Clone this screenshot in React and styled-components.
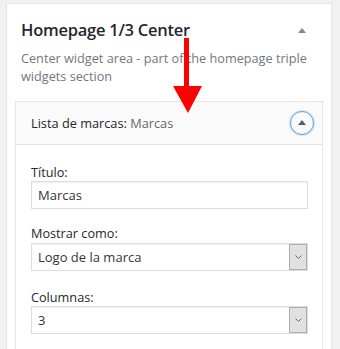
import React from "react";
import styled, { createGlobalStyle } from "styled-components";

const GlobalStyle = createGlobalStyle`
  html, body { margin: 0; padding: 0; }
  body {
    background: #f1f1f1;
    font-family: "Open Sans", "Noto Sans", sans-serif;
    color: #23282d;
  }
`;

const Page = styled.div`
  position: relative;
  width: 340px;
  height: 349px;
  overflow: hidden;
  padding: 3px 0 0 6px;
  box-sizing: border-box;
`;

const Panel = styled.section`
  width: 326px;
  box-sizing: border-box;
  background: #fff;
  border: 1px solid #e5e5e5;
  box-shadow: 0 1px 1px rgba(0, 0, 0, 0.04);
  min-height: 360px;
`;

const PanelHead = styled.div`
  display: flex;
  align-items: center;
  justify-content: space-between;
  padding: 14px 17px 0 14px;
`;

const Title = styled.h2`
  margin: 0;
  font-size: 16.5px;
  letter-spacing: -0.25px;
  line-height: 24px;
  font-weight: 600;
  color: #23282d;
`;

const ToggleButton = styled.button`
  width: 24px;
  height: 24px;
  padding: 0;
  border: 0;
  background: transparent;
  display: flex;
  align-items: center;
  justify-content: center;
`;

const Triangle = styled.span`
  width: 0;
  height: 0;
  border-left: 4px solid transparent;
  border-right: 4px solid transparent;
  border-bottom: 5px solid ${(p) => p.$color || "#72777c"};
`;

const Description = styled.p`
  margin: 7px 0 0;
  padding: 0 14px;
  font-size: 12.7px;
  line-height: 18px;
  color: #72777c;
`;

const WidgetsArea = styled.div`
  padding: 16px 8px 0;
`;

const Widget = styled.div`
  border: 1px solid #e5e5e5;
  background: #fff;
`;

const WidgetTop = styled.div`
  height: 42px;
  background: #fafafa;
  border-bottom: 1px solid #e5e5e5;
  display: flex;
  align-items: center;
  justify-content: space-between;
  padding: 0 8px 0 15px;
`;

const WidgetTitle = styled.h3`
  margin: 0;
  font-size: 12.75px;
  font-weight: 400;
  color: #23282d;
`;

const InWidgetTitle = styled.span`
  color: #606a73;
`;

const CircleToggle = styled.button`
  width: 24px;
  height: 24px;
  box-sizing: border-box;
  padding: 0 0 1px;
  border-radius: 50%;
  border: 1px solid #5b9dd9;
  box-shadow: 0 0 2px rgba(30, 140, 190, 0.6);
  background: transparent;
  display: flex;
  align-items: center;
  justify-content: center;
`;

const WidgetInside = styled.div`
  padding: 18px 14px 20px 15px;
  display: flex;
  flex-direction: column;
`;

const Field = styled.div`
  display: flex;
  flex-direction: column;
  margin-top: ${(p) => p.$gap || 0}px;
`;

const Label = styled.label`
  font-size: 12.7px;
  line-height: 18px;
  color: #23282d;
  margin-bottom: ${(p) => p.$after || 0}px;
`;

const TextInput = styled.div`
  height: 28px;
  box-sizing: border-box;
  border: 1px solid #ddd;
  box-shadow: inset 0 1px 2px rgba(0, 0, 0, 0.07);
  background: #fff;
  padding: 0 6px;
  display: flex;
  align-items: center;
  font-size: 13px;
  color: #32373c;
`;

const Select = styled.div`
  height: 28px;
  box-sizing: border-box;
  border: 1px solid #ddd;
  box-shadow: inset 0 1px 2px rgba(0, 0, 0, 0.07);
  background: #fff;
  display: flex;
  align-items: stretch;
  font-size: 13px;
  color: #32373c;
`;

const SelectValue = styled.span`
  flex: 1;
  display: flex;
  align-items: center;
  padding: 0 6px;
`;

const SelectArrow = styled.span`
  width: 18px;
  box-sizing: border-box;
  border: 1px solid #adadad;
  background: #e1e1e1;
  display: flex;
  align-items: center;
  justify-content: center;
`;

const Chevron = () => (
  <svg width="7" height="4" viewBox="0 0 7 4">
    <path d="M0.5 0.5 L3.5 3.5 L6.5 0.5" fill="none" stroke="#606060" strokeWidth="0.9" />
  </svg>
);

const ArrowOverlay = styled.svg`
  position: absolute;
  left: 173px;
  top: 38px;
`;

export default function App() {
  return (
    <>
      <GlobalStyle />
      <Page>
        <Panel>
          <PanelHead>
            <Title>Homepage 1/3 Center</Title>
            <ToggleButton aria-label="Collapse">
              <Triangle $color="#82878c" />
            </ToggleButton>
          </PanelHead>
          <Description>
            Center widget area - part of the homepage triple widgets section
          </Description>
          <WidgetsArea>
            <Widget>
              <WidgetTop>
                <WidgetTitle>
                  Lista de marcas: <InWidgetTitle>Marcas</InWidgetTitle>
                </WidgetTitle>
                <CircleToggle aria-label="Toggle widget">
                  <Triangle $color="#555d66" />
                </CircleToggle>
              </WidgetTop>
              <WidgetInside>
                <Field>
                  <Label>Título:</Label>
                  <TextInput>Marcas</TextInput>
                </Field>
                <Field $gap={15}>
                  <Label $after={1}>Mostrar como:</Label>
                  <Select>
                    <SelectValue>Logo de la marca</SelectValue>
                    <SelectArrow>
                      <Chevron />
                    </SelectArrow>
                  </Select>
                </Field>
                <Field $gap={17}>
                  <Label>Columnas:</Label>
                  <Select>
                    <SelectValue>3</SelectValue>
                    <SelectArrow>
                      <Chevron />
                    </SelectArrow>
                  </Select>
                </Field>
              </WidgetInside>
            </Widget>
          </WidgetsArea>
        </Panel>
        <ArrowOverlay width="30" height="76" viewBox="0 0 30 76">
          <rect x="11" y="0" width="5" height="49" fill="#ff0000" />
          <polygon points="0,48 29,48 15,75" fill="#ff0000" />
        </ArrowOverlay>
      </Page>
    </>
  );
}
